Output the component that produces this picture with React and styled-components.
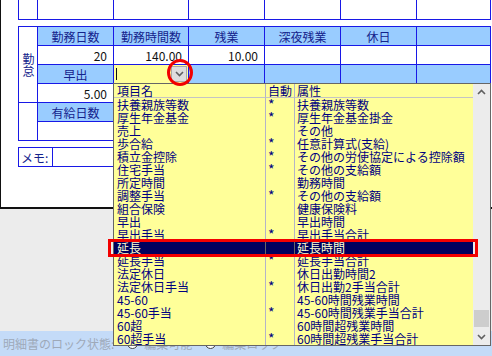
import React from 'react';
import styled, { createGlobalStyle } from 'styled-components';

const LINE = '#1818e6';
const HEAD = '#99ccff';
const INK = '#14238c';
const YELLOW = '#ffff99';

const GlobalStyle = createGlobalStyle`
  html, body { margin: 0; padding: 0; }
  body {
    width: 492px;
    height: 356px;
    overflow: hidden;
    font-family: "Noto Sans CJK JP", "Noto Sans", sans-serif;
    font-size: 12px;
  }
`;

const Page = styled.div`
  position: relative;
  width: 492px;
  height: 356px;
  display: flex;
  flex-direction: column;
  background: #ececec;
  overflow: hidden;
`;

const Panel = styled.div`
  height: 209px;
  box-sizing: border-box;
  background: #fff;
  border-left: 1px solid #111;
  border-bottom: 2px solid #111;
  padding-left: 17px;
`;

const Filler = styled.div`
  flex: 1;
`;

const Grid = styled.div`
  display: grid;
  grid-template-columns: ${p => p.$cols};
  grid-auto-rows: ${p => p.$row}px;
  width: max-content;
  margin-top: ${p => p.$gap || 0}px;
  border-left: 1px solid ${LINE};
  border-top: ${p => (p.$open ? 'none' : `1px solid ${LINE}`)};
`;

const Cell = styled.div`
  box-sizing: border-box;
  display: flex;
  align-items: center;
  justify-content: ${p => (p.$align === 'right' ? 'flex-end' : p.$align === 'left' ? 'flex-start' : 'center')};
  padding: 0 ${p => (p.$align === 'left' ? '2px' : '6px')};
  grid-row: ${p => (p.$rows ? `span ${p.$rows}` : 'auto')};
  background: ${p => p.$bg || '#fff'};
  border-right: 1px solid ${LINE};
  border-bottom: 1px solid ${LINE};
  color: ${p => (p.$num ? '#111' : INK)};
  font-size: 12px;
  line-height: 13px;
  white-space: nowrap;
`;

const Vertical = styled.span`
  writing-mode: vertical-rl;
  font-size: 12px;
  line-height: 12px;
  color: ${INK};
`;

const Combo = styled(Cell)`
  background: ${YELLOW};
  justify-content: space-between;
  padding: 0 1px 0 2px;
`;

const Caret = styled.span`
  width: 1px;
  height: 12px;
  background: #111;
`;

const ComboButton = styled.span`
  width: 16px;
  height: 16px;
  box-sizing: border-box;
  display: flex;
  align-items: center;
  justify-content: center;
  background: #dedede;
  border: 1px solid #a9a9a9;
`;

const BottomBar = styled.div`
  height: 25px;
  background: #c4dbf8;
  display: flex;
  align-items: center;
  padding-left: 3px;
  color: #9ea9b8;
  font-size: 12px;
`;

const LockLabel = styled.span`
  margin-right: 13px;
`;

const Radio = styled.span`
  width: 11px;
  height: 11px;
  box-sizing: border-box;
  border-radius: 50%;
  border: 1px solid #444;
  background: #fff;
  margin-right: 6px;
`;

const RadioText = styled.span`
  margin-right: 13px;
`;

const Dropdown = styled.div`
  position: absolute;
  left: 113px;
  top: 83px;
  width: 378px;
  height: 263px;
  box-sizing: border-box;
  border: 1px solid #666;
  background: ${YELLOW};
  display: flex;
`;

const List = styled.div`
  flex: 1;
  display: grid;
  grid-template-columns: 152px 29px 1fr;
  grid-template-rows: 14px;
  grid-auto-rows: 13px;
  align-content: start;
`;

const Item = styled.div`
  box-sizing: border-box;
  padding-left: ${p => (p.$col === 0 ? 3 : 2)}px;
  font-size: ${p => (p.$col === 1 && !p.$head ? 14 : 12)}px;
  line-height: 13px;
  white-space: nowrap;
  color: ${p => (p.$active ? '#ffffd0' : '#000080')};
  background: ${p => (p.$active ? '#00005e' : 'transparent')};
  border-right: ${p => (p.$col < 2 ? `1px solid ${p.$active ? '#666' : '#b4b4c8'}` : 'none')};
  border-bottom: ${p => (p.$head ? '1px solid #c4c4c4' : 'none')};
`;

const Scrollbar = styled.div`
  width: 17px;
  background: #ececec;
  display: flex;
  flex-direction: column;
  align-items: center;
`;

const ScrollArrow = styled.div`
  height: 16px;
  width: 17px;
  display: flex;
  align-items: center;
  justify-content: center;
`;

const Track = styled.div`
  flex: 1;
  width: 15px;
  padding-top: ${p => p.$offset}px;
`;

const Thumb = styled.div`
  height: 17px;
  background: #cdcdcd;
`;

const RedCircle = styled.div`
  position: absolute;
  left: 167px;
  top: 59px;
  width: 26px;
  height: 27px;
  box-sizing: border-box;
  border: 3px solid #f20000;
  border-radius: 50%;
`;

const RedBox = styled.div`
  position: absolute;
  left: 108px;
  top: 239px;
  width: 370px;
  height: 18px;
  box-sizing: border-box;
  border: 3px solid #f20000;
`;

const Chevron = ({ up }) => (
  <svg width="9" height="6" viewBox="0 0 9 6">
    <path
      d={up ? 'M1 5 L4.5 1.5 L8 5' : 'M1 1 L4.5 4.5 L8 1'}
      fill="none"
      stroke="#606060"
      strokeWidth="1.6"
    />
  </svg>
);

const cols = '19px 76px 75px 76px 76px 76px 74px';

const items = [
  ['扶養親族等数', '*', '扶養親族等数'],
  ['厚生年金基金', '*', '厚生年金基金掛金'],
  ['売上', '', 'その他'],
  ['歩合給', '*', '任意計算式(支給)'],
  ['積立金控除', '*', 'その他の労使協定による控除額'],
  ['住宅手当', '*', 'その他の支給額'],
  ['所定時間', '', '勤務時間'],
  ['調整手当', '*', 'その他の支給額'],
  ['組合保険', '', '健康保険料'],
  ['早出', '', '早出時間'],
  ['早出手当', '*', '早出手当合計'],
  ['延長', '', '延長時間'],
  ['延長手当', '*', '延長手当合計'],
  ['法定休日', '', '休日出勤時間2'],
  ['法定休日手当', '*', '休日出勤2手当合計'],
  ['45-60', '', '45-60時間残業時間'],
  ['45-60手当', '*', '45-60時間残業手当合計'],
  ['60超', '', '60時間超残業時間'],
  ['60超手当', '*', '60時間超残業手当合計'],
];

const selected = 11;

const App = () => {
  return (
    <Page>
      <GlobalStyle />
      <Panel>
        <Grid $cols={cols} $row={20} $open>
          {Array.from({ length: 7 }).map((_, i) => <Cell key={i} />)}
        </Grid>

        <Grid $cols={cols} $row={19} $gap={6}>
          <Cell $rows={4} style={{ padding: 0 }}><Vertical>勤怠</Vertical></Cell>
          <Cell $bg={HEAD}>勤務日数</Cell>
          <Cell $bg={HEAD}>勤務時間数</Cell>
          <Cell $bg={HEAD}>残業</Cell>
          <Cell $bg={HEAD}>深夜残業</Cell>
          <Cell $bg={HEAD}>休日</Cell>
          <Cell $bg={HEAD} />

          <Cell $align="right" $num>20</Cell>
          <Cell $align="right" $num>140.00</Cell>
          <Cell $align="right" $num>10.00</Cell>
          <Cell />
          <Cell />
          <Cell />

          <Cell $bg={HEAD}>早出</Cell>
          <Combo>
            <Caret />
            <ComboButton><Chevron /></ComboButton>
          </Combo>
          <Cell $bg={HEAD} />
          <Cell $bg={HEAD} />
          <Cell $bg={HEAD} />
          <Cell $bg={HEAD} />

          <Cell $align="right" $num>5.00</Cell>
          <Cell />
          <Cell />
          <Cell />
          <Cell />
          <Cell />

          <Cell $rows={2} />
          <Cell $bg={HEAD}>有給日数</Cell>
          <Cell $bg={HEAD} />
          <Cell $bg={HEAD} />
          <Cell $bg={HEAD} />
          <Cell $bg={HEAD} />
          <Cell $bg={HEAD} />

          <Cell />
          <Cell />
          <Cell />
          <Cell />
          <Cell />
          <Cell />
        </Grid>

        <Grid $cols="34px 438px" $row={19} $gap={6}>
          <Cell $align="left">メモ:</Cell>
          <Cell />
        </Grid>
      </Panel>

      <Filler />

      <BottomBar>
        <LockLabel>明細書のロック状態:</LockLabel>
        <Radio />
        <RadioText>編集可能</RadioText>
        <Radio />
        <RadioText>編集ロック</RadioText>
      </BottomBar>

      <Dropdown>
        <List>
          <Item $col={0} $head>項目名</Item>
          <Item $col={1} $head>自動</Item>
          <Item $col={2} $head>属性</Item>
          {items.map((row, r) =>
            row.map((text, c) => (
              <Item key={`${r}-${c}`} $col={c} $active={r === selected}>
                {text}
              </Item>
            ))
          )}
        </List>
        <Scrollbar>
          <ScrollArrow><Chevron up /></ScrollArrow>
          <Track $offset={210}><Thumb /></Track>
          <ScrollArrow><Chevron /></ScrollArrow>
        </Scrollbar>
      </Dropdown>

      <RedCircle />
      <RedBox />
    </Page>
  );
};

export default App;
